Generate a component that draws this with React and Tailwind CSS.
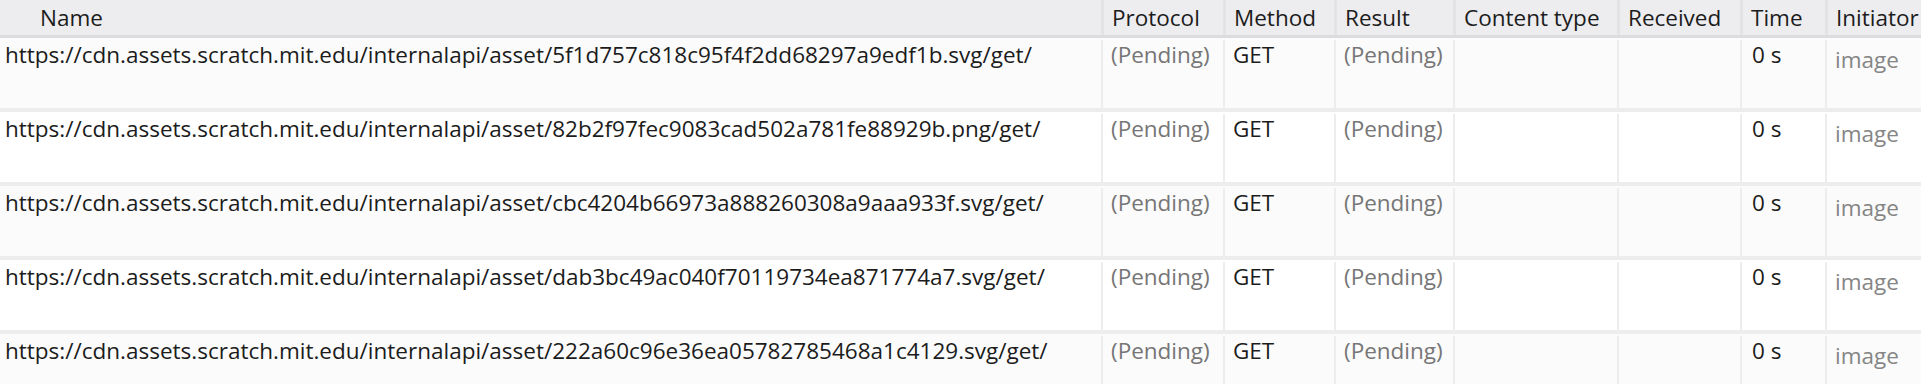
const cols = [
  { key: 'name', label: 'Name', w: 'w-[1101px]' },
  { key: 'protocol', label: 'Protocol', w: 'w-[122px]' },
  { key: 'method', label: 'Method', w: 'w-[111px]' },
  { key: 'result', label: 'Result', w: 'w-[119px]' },
  { key: 'type', label: 'Content type', w: 'w-[164px]' },
  { key: 'received', label: 'Received', w: 'w-[123px]' },
  { key: 'time', label: 'Time', w: 'w-[85px]' },
  { key: 'initiator', label: 'Initiator', w: 'flex-1' },
]

const requests = [
  'https://cdn.assets.scratch.mit.edu/internalapi/asset/5f1d757c818c95f4f2dd68297a9edf1b.svg/get/',
  'https://cdn.assets.scratch.mit.edu/internalapi/asset/82b2f97fec9083cad502a781fe88929b.png/get/',
  'https://cdn.assets.scratch.mit.edu/internalapi/asset/cbc4204b66973a888260308a9aaa933f.svg/get/',
  'https://cdn.assets.scratch.mit.edu/internalapi/asset/dab3bc49ac040f70119734ea871774a7.svg/get/',
  'https://cdn.assets.scratch.mit.edu/internalapi/asset/222a60c96e36ea05782785468a1c4129.svg/get/',
]

function Cell({ w, first, children, className = '' }) {
  return (
    <div className={`${w} shrink-0 h-full overflow-hidden whitespace-nowrap ${first ? 'pl-[5px]' : 'border-l-2 border-[#ededed] pl-[8px]'} ${className}`}>
      {children}
    </div>
  )
}

function Row({ url, odd }) {
  return (
    <div className={`flex h-[74px] border-b-4 border-[#ededed] pt-[2px] ${odd ? 'bg-[#fbfbfb]' : 'bg-white'}`}>
      <Cell w={cols[0].w} first>{url}</Cell>
      <Cell w={cols[1].w} className="text-[#767676]">(Pending)</Cell>
      <Cell w={cols[2].w}>GET</Cell>
      <Cell w={cols[3].w} className="text-[#767676]">(Pending)</Cell>
      <Cell w={cols[4].w} />
      <Cell w={cols[5].w} />
      <Cell w={cols[6].w} className="pl-[10px]">0 s</Cell>
      <Cell w={cols[7].w} className="pt-[5px] text-[#858585]">image</Cell>
    </div>
  )
}

export default function App() {
  return (
    <div className="w-[1921px] h-[384px] overflow-hidden bg-white text-[#1c1c1c] text-[22.5px] leading-[30px]" style={{ fontFamily: '"Open Sans", "Noto Sans", sans-serif' }}>
      <div className="flex h-[38px] bg-[#ededf0] border-b-[3px] border-[#dcdcdf]">
        {cols.map((c, i) => (
          <div
            key={c.key}
            className={`${c.w} shrink-0 flex items-center whitespace-nowrap ${i === 0 ? 'pl-[40px]' : 'border-l-[3px] border-[#e3e3e6] pl-[8px]'}`}
          >
            {c.label}
          </div>
        ))}
      </div>
      {requests.map((url, i) => (
        <Row key={url} url={url} odd={i % 2 === 0} />
      ))}
    </div>
  )
}
